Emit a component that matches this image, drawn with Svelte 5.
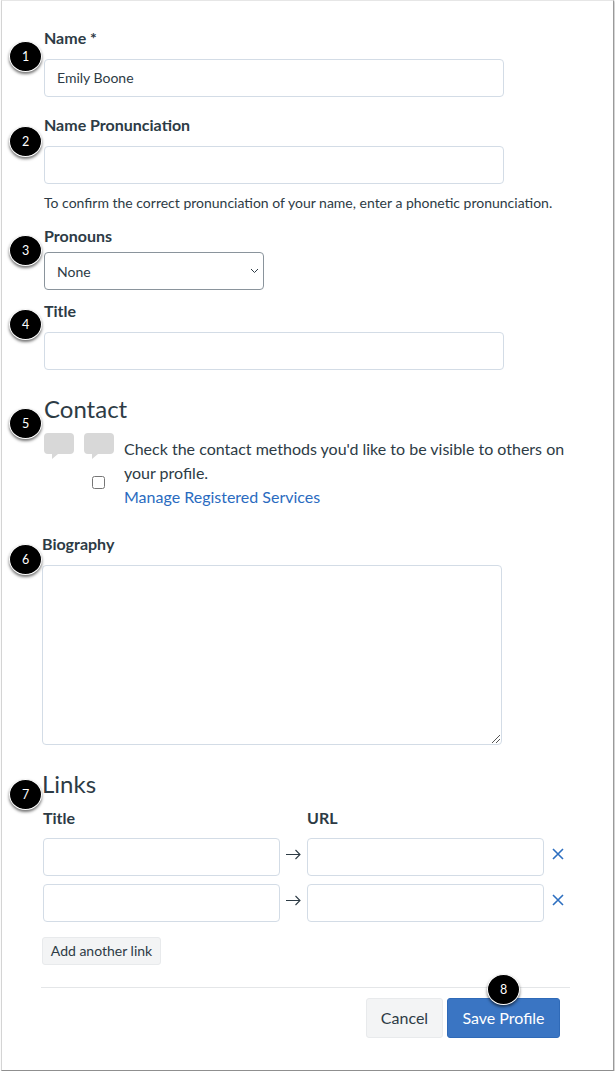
<script>
  const badges = [
    { n: 1, x: 24, y: 56 },
    { n: 2, x: 24, y: 141 },
    { n: 3, x: 24, y: 250 },
    { n: 4, x: 24, y: 324 },
    { n: 5, x: 24, y: 423 },
    { n: 6, x: 24, y: 559 },
    { n: 7, x: 24, y: 794 },
    { n: 8, x: 502, y: 989 }
  ];
  const links = [0, 1];
</script>

<div class="frame">
  <form class="profile">
    <div class="field">
      <label for="name">Name *</label>
      <input id="name" type="text" value="Emily Boone" />
    </div>
    <div class="field pron">
      <label for="pron">Name Pronunciation</label>
      <input id="pron" type="text" />
      <p class="help">To confirm the correct pronunciation of your name, enter a phonetic pronunciation.</p>
    </div>
    <div class="field pronouns">
      <label for="pronouns">Pronouns</label>
      <div class="select" id="pronouns">
        <span>None</span>
        <svg width="9" height="6" viewBox="0 0 9 6"><path d="M1 1l3.5 3.5L8 1" fill="none" stroke="#2d3b45" stroke-width="1" /></svg>
      </div>
    </div>
    <div class="field title">
      <label for="title">Title</label>
      <input id="title" type="text" />
    </div>

    <h2 class="contact-head">Contact</h2>
    <div class="contact">
      <div class="services">
        <div class="bubbles">
          {#each [0, 1] as b (b)}
            <svg width="30" height="27" viewBox="0 0 30 27"><path d="M4 0h22a4 4 0 0 1 4 4v13a4 4 0 0 1-4 4H14l-6 5v-5H4a4 4 0 0 1-4-4V4a4 4 0 0 1 4-4z" fill="#d8d8d8" /></svg>
          {/each}
        </div>
        <input class="check" type="checkbox" />
      </div>
      <div class="contact-text">
        <div>Check the contact methods you'd like to be visible to others on your profile.</div>
        <a href="#services">Manage Registered Services</a>
      </div>
    </div>

    <div class="bio">
      <label for="bio">Biography</label>
      <div class="textarea" id="bio">
        <svg class="grip" width="8" height="8" viewBox="0 0 8 8"><path d="M0 8L8 0M4 8l4-4" stroke="#555" stroke-width="1" fill="none" /></svg>
      </div>
    </div>

    <h2 class="links-head">Links</h2>
    <div class="links-labels">
      <span class="col">Title</span>
      <span class="col">URL</span>
    </div>
    {#each links as l (l)}
      <div class="link-row">
        <input type="text" />
        <svg class="arrow" width="15" height="11" viewBox="0 0 15 11"><path d="M0 5.5h14M9.5 1L14 5.5 9.5 10" fill="none" stroke="#2d3b45" stroke-width="1.1" /></svg>
        <input type="text" />
        <svg class="remove" width="12" height="12" viewBox="0 0 12 12"><path d="M1 1l10 10M11 1L1 11" fill="none" stroke="#2d6fc0" stroke-width="1.6" /></svg>
      </div>
    {/each}
    <button class="add" type="button">Add another link</button>

    <div class="actions">
      <button class="btn" type="button">Cancel</button>
      <button class="btn primary" type="button">Save Profile</button>
    </div>
  </form>

  {#each badges as b (b.n)}
    <div class="badge" style="left: {b.x}px; top: {b.y}px">{b.n}</div>
  {/each}
</div>

<style>
  :global(body) {
    margin: 0;
    background: #fff;
    font-family: Lato, "Open Sans", sans-serif;
    color: #2d3b45;
  }
  .frame {
    position: relative;
    box-sizing: border-box;
    width: 613px;
    height: 1071px;
    margin-left: 1px;
    border: 1px solid #d4d4d4;
    border-top-color: #e6e6e6;
    border-bottom-color: #8f8f8f;
    border-right-color: #9a9a9a;
    box-shadow: 1px 1px 2px rgba(0, 0, 0, 0.25);
    background: #fff;
  }
  .profile {
    display: flex;
    flex-direction: column;
    padding: 28px 0 0 42px;
  }
  .field {
    display: flex;
    flex-direction: column;
  }
  label, .col {
    font-weight: 700;
    font-size: 16px;
    line-height: 18px;
    display: block;
  }
  label {
    margin-bottom: 12px;
  }
  input[type="text"] {
    box-sizing: border-box;
    height: 38px;
    border: 1px solid #d3dce6;
    border-radius: 4px;
    padding: 0 12px 1px;
    font: 14px Lato, sans-serif;
    color: #2d3b45;
    background: #fff;
    outline: none;
  }
  .field input[type="text"] {
    width: 460px;
  }
  .pron {
    margin-top: 19px;
  }
  .help {
    margin: 10px 0 0;
    font-size: 14px;
    line-height: 18px;
  }
  .pronouns {
    margin-top: 15px;
  }
  .pronouns label {
    margin-bottom: 7px;
  }
  .select {
    box-sizing: border-box;
    width: 220px;
    height: 38px;
    border: 1px solid #8a949c;
    border-radius: 4px;
    padding: 0 4px 0 12px;
    display: flex;
    align-items: center;
    justify-content: space-between;
    font-size: 14px;
  }
  .title {
    margin-top: 12px;
  }
  h2 {
    margin: 0;
    font-weight: 400;
    font-size: 24px;
    line-height: 30px;
  }
  .contact-head {
    margin-top: 24px;
  }
  .contact {
    display: flex;
    margin-top: 9px;
  }
  .services {
    width: 80px;
    flex: none;
  }
  .bubbles {
    display: flex;
    gap: 10px;
    height: 27px;
  }
  .check {
    display: block;
    box-sizing: border-box;
    width: 13px;
    height: 13px;
    margin: 16px 0 0 48px;
  }
  .contact-text {
    width: 450px;
    font-size: 16px;
    line-height: 24px;
    margin-top: 4px;
  }
  a {
    color: #2a6bbf;
    text-decoration: none;
  }
  .bio {
    margin: 26px 0 0 -2px;
  }
  .textarea {
    position: relative;
    box-sizing: border-box;
    width: 460px;
    height: 180px;
    border: 1px solid #d3dce6;
    border-radius: 4px;
  }
  .grip {
    position: absolute;
    right: 1px;
    bottom: 1px;
  }
  .links-head {
    margin: 24px 0 0 -2px;
  }
  .links-labels {
    display: flex;
    margin: 10px 0 11px -1px;
  }
  .links-labels .col {
    width: 264px;
  }
  .link-row {
    display: flex;
    align-items: center;
    margin: 0 0 8px -1px;
  }
  .link-row input {
    width: 237px;
  }
  .arrow {
    margin: 0 6px 5px;
  }
  .remove {
    margin: 0 0 6px 8px;
  }
  .add {
    align-self: flex-start;
    box-sizing: border-box;
    margin: 7px 0 0 -2px;
    height: 28px;
    width: 119px;
    padding: 0 0 2px;
    border: 1px solid #e8eaec;
    border-radius: 3px;
    background: #f3f4f5;
    color: #2d3b45;
    font: 14px Lato, sans-serif;
  }
  .actions {
    display: flex;
    justify-content: flex-end;
    gap: 4px;
    box-sizing: border-box;
    width: 529px;
    margin: 22px 0 0 -3px;
    padding: 10px 10px 0 0;
    border-top: 1px solid #e4e6e8;
  }
  .btn {
    box-sizing: border-box;
    height: 40px;
    width: 77px;
    padding: 0 0 2px;
    border: 1px solid #e8eaec;
    border-radius: 3px;
    background: #f3f4f5;
    color: #2d3b45;
    font: 16px Lato, sans-serif;
  }
  .btn.primary {
    width: 113px;
    background: #3a75c3;
    border-color: #2f6ab8;
    color: #fff;
  }
  .badge {
    position: absolute;
    box-sizing: border-box;
    width: 33px;
    height: 31px;
    margin: -16px 0 0 -17px;
    border-radius: 50%;
    background: #000;
    color: #fff;
    border: 1px solid #fff;
    box-shadow: 0 2px 3px rgba(0, 0, 0, 0.55);
    display: flex;
    align-items: center;
    justify-content: center;
    font-size: 12.5px;
  }
</style>
